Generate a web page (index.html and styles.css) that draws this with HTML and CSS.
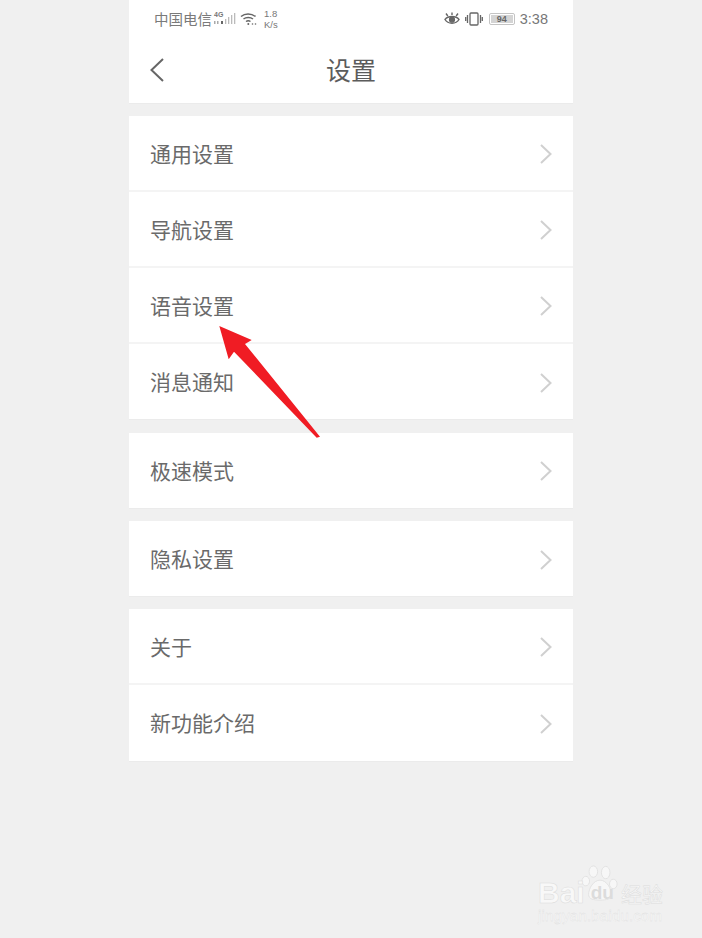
FILE: index.html
```html
<!DOCTYPE html>
<html lang="zh-CN">
<head>
  <meta charset="UTF-8">
  <title>设置</title>
  <link rel="stylesheet" href="styles.css">
</head>
<body>
  <div class="phone">
    <header class="top">
      <div class="status">
        <div class="status-left">
          <span class="carrier">中国电信</span>
          <svg class="signal" width="24" height="16" viewBox="0 0 24 16">
            <text x="1" y="6" class="tiny">4G</text>
            <rect x="1" y="10" width="1.500" height="3" fill="#aaa"/>
            <rect x="4" y="10" width="1.500" height="3" fill="#aaa"/>
            <rect x="8" y="10" width="2" height="3" fill="#666"/>
            <rect x="12" y="8" width="1.300" height="5" fill="#bbb"/>
            <rect x="15" y="6" width="1.300" height="7" fill="#bbb"/>
            <rect x="18" y="4" width="1.300" height="9" fill="#bbb"/>
            <rect x="21" y="2" width="1.300" height="11" fill="#bbb"/>
          </svg>
          <svg class="wifi" width="18" height="14" viewBox="0 0 18 14" fill="none" stroke="#666" stroke-width="1.500">
            <path d="M1 4.500C5 1 11 1 15.500 4.500"/>
            <path d="M3.500 7C6 5 10.500 5 13 7"/>
            <path d="M6 9.500C7.500 8.500 9 8.500 10.500 9.500"/>
            <circle cx="8.300" cy="12" r="1" fill="#666" stroke="none"/>
            <circle cx="12.500" cy="12" r=".8" fill="#666" stroke="none"/>
            <circle cx="15.500" cy="12" r=".8" fill="#666" stroke="none"/>
          </svg>
          <span class="speed">1.8<br>K/s</span>
        </div>
        <div class="status-right">
          <svg width="16" height="14" viewBox="0 0 16 14" fill="none" stroke="#666" stroke-width="1.400">
            <path d="M1 7.500C4 3.500 12 3.500 15 7.500C12 12.500 4 12.500 1 7.500Z"/>
            <circle cx="8" cy="7.700" r="2.400" fill="#666"/>
            <path d="M2 1.500L3.800 4M8 .5V3M14 1.500L12.200 4"/>
          </svg>
          <svg width="18" height="14" viewBox="0 0 18 14" fill="none" stroke="#666" stroke-width="1.300">
            <rect x="5" y="1" width="8" height="12" rx="1"/>
            <path d="M2.500 3V11M.7 5V9M15.500 3V11M17.300 5V9"/>
          </svg>
          <span class="battery"><span class="battery-level">94</span></span>
          <span class="clock">3:38</span>
        </div>
      </div>
      <div class="titlebar">
        <svg class="back" width="16" height="26" viewBox="0 0 16 26" fill="none" stroke="#666" stroke-width="2">
          <path d="M14 2L2.500 13L14 24"/>
        </svg>
        <h1>设置</h1>
      </div>
    </header>

    <section class="group">
      <div class="row">通用设置<svg class="chev" width="14" height="22" viewBox="0 0 14 22"><path d="M2 2L11.500 11L2 20"/></svg></div>
      <div class="row">导航设置<svg class="chev" width="14" height="22" viewBox="0 0 14 22"><path d="M2 2L11.500 11L2 20"/></svg></div>
      <div class="row">语音设置<svg class="chev" width="14" height="22" viewBox="0 0 14 22"><path d="M2 2L11.500 11L2 20"/></svg></div>
      <div class="row">消息通知<svg class="chev" width="14" height="22" viewBox="0 0 14 22"><path d="M2 2L11.500 11L2 20"/></svg></div>
    </section>
    <section class="group">
      <div class="row">极速模式<svg class="chev" width="14" height="22" viewBox="0 0 14 22"><path d="M2 2L11.500 11L2 20"/></svg></div>
    </section>
    <section class="group">
      <div class="row">隐私设置<svg class="chev" width="14" height="22" viewBox="0 0 14 22"><path d="M2 2L11.500 11L2 20"/></svg></div>
    </section>
    <section class="group">
      <div class="row">关于<svg class="chev" width="14" height="22" viewBox="0 0 14 22"><path d="M2 2L11.500 11L2 20"/></svg></div>
      <div class="row">新功能介绍<svg class="chev" width="14" height="22" viewBox="0 0 14 22"><path d="M2 2L11.500 11L2 20"/></svg></div>
    </section>
  </div>

  <!-- red arrow over the list -->
  <svg class="arrow" width="110" height="120" viewBox="0 0 110 120">
    <path d="M1.300 1L33.700 15L27 19L102 111.700L98.700 112.700L16 26.700L10.700 34.300Z" fill="#f01c24"/>
  </svg>

  <div class="watermark">
    <svg class="paw" width="38" height="40" viewBox="0 0 40 38" fill="#f7f7f7" stroke="#e2e2e2" stroke-width="1">
      <ellipse cx="5" cy="17" rx="4" ry="5"/>
      <ellipse cx="13" cy="7" rx="4.500" ry="6"/>
      <ellipse cx="26" cy="8" rx="4.500" ry="6.500"/>
      <ellipse cx="34" cy="20" rx="4" ry="5"/>
      <path d="M20 16C13 16 8 25 8 31C8 36 13 37 20 37C27 37 32 36 32 31C32 25 27 16 20 16Z"/>
    </svg>
    <div class="mark-line"><span class="mark-bai">Bai</span><span class="mark-du">du</span><span class="mark-cn">经验</span></div>
    <div class="mark-url">jingyan.baidu.com</div>
  </div>
</body>
</html>
```

FILE: styles.css
```css
html, body {
  margin: 0;
  height: 938px;
  overflow: hidden;
  background-color: #f0f0f0;
}
body {
  position: relative;
  font-family: "Liberation Sans", "Noto Sans CJK SC", sans-serif;
  color: #666;
}
.phone {
  width: 444px;
  margin-left: 129px;
  display: flex;
  flex-direction: column;
  gap: 13.200px;
}
.top {
  height: 103px;
  background-color: #fff;
  box-shadow: 0 1px 0 #ebebeb;
}
.status {
  height: 37px;
  padding: 0 25px;
  display: flex;
  justify-content: space-between;
  align-items: center;
}
.status-left, .status-right {
  display: flex;
  align-items: center;
}
.carrier {
  font-size: 14.500px;
  color: #7a7a7a;
}
.signal {
  margin-left: 1px;
}
.tiny {
  font-size: 7px;
  font-weight: bold;
  fill: #777;
}
.wifi {
  margin-left: 3px;
}
.speed {
  margin-left: 6px;
  font-size: 9.500px;
  line-height: 11px;
  color: #777;
}
.status-right {
  gap: 5px;
}
.battery {
  box-sizing: border-box;
  width: 26px;
  height: 12px;
  margin-left: 1px;
  padding: 1px;
  border: 1px solid #c4c4c4;
  border-radius: 2px;
  display: flex;
  align-items: center;
  justify-content: center;
}
.battery-level {
  width: 100%;
  text-align: center;
  background-color: #d4d4d4;
  font-size: 9px;
  font-weight: bold;
  line-height: 8px;
  color: #666;
}
.clock {
  font-size: 14.500px;
  color: #777;
}
.titlebar {
  height: 63px;
  display: flex;
  align-items: center;
  justify-content: center;
  position: relative;
}
.back {
  position: absolute;
  left: 20px;
  top: 20px;
}
h1 {
  margin: 0;
  font-size: 25px;
  font-weight: normal;
  color: #5c5c5c;
}
.group {
  background-color: #fff;
  display: flex;
  flex-direction: column;
  box-shadow: 0 1px 0 #ebebeb;
}
.row {
  box-sizing: border-box;
  height: 76px;
  padding: 0 21px 1px;
  display: flex;
  align-items: center;
  justify-content: space-between;
  font-size: 21px;
  color: #6a6a6a;
  border-bottom: 2px solid #f4f4f4;
}
.row:last-child {
  border-bottom: 0;
  height: 75.200px;
}
.chev {
  margin-right: -1px;
  margin-top: 3px;
  fill: none;
  stroke: #d0d0d0;
  stroke-width: 2;
}
.arrow {
  position: absolute;
  left: 218px;
  top: 325px;
}
.watermark {
  position: absolute;
  left: 538px;
  top: 862px;
  width: 130px;
  color: #f8f8f8;
}
.paw {
  position: absolute;
  left: 43px;
  top: 1px;
}
.mark-line {
  position: relative;
  margin-top: 17px;
  display: flex;
  align-items: center;
  height: 28px;
  -webkit-text-stroke: 0.500px #dcdcdc;
}
.mark-bai {
  font-size: 30px;
  font-weight: bold;
}
.mark-du {
  margin-left: 6px;
  font-size: 19px;
  font-weight: bold;
  color: #dcdcdc;
  -webkit-text-stroke: 0;
}
.mark-cn {
  margin-left: 7px;
  font-size: 21px;
}
.mark-url {
  font-size: 15px;
  line-height: 18px;
  letter-spacing: 0.200px;
  white-space: nowrap;
  -webkit-text-stroke: 0.300px #dcdcdc;
}
```
